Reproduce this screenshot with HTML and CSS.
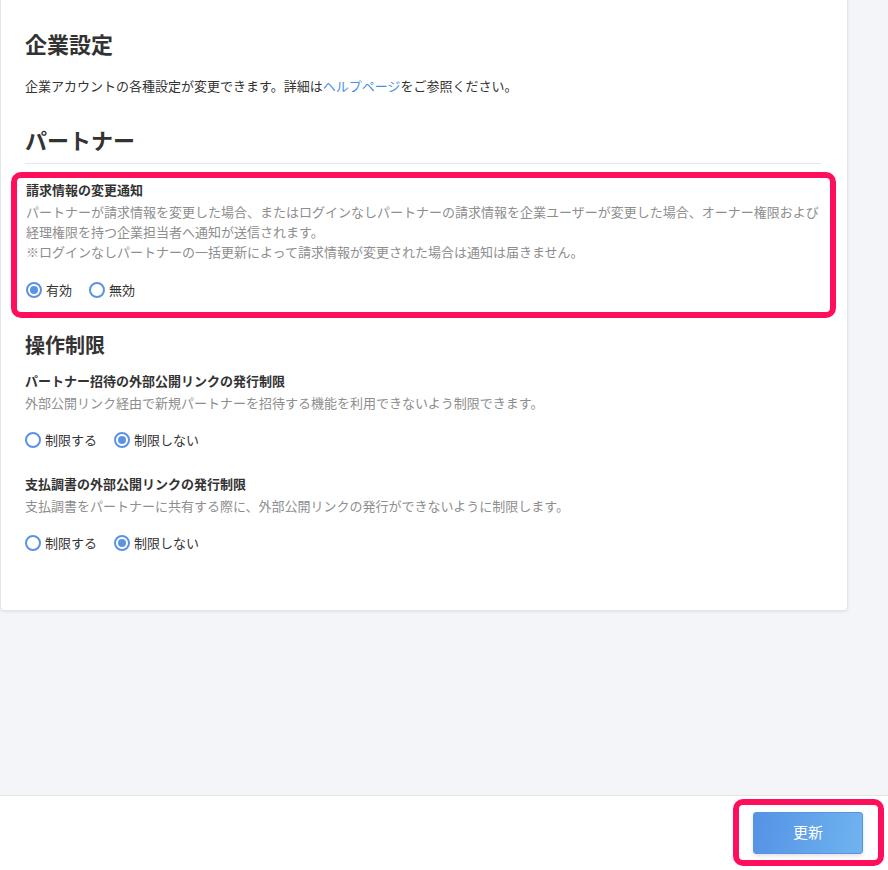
FILE: index.html
```html
<!DOCTYPE html>
<html lang="ja">

<head>
    <meta charset="UTF-8">
    <meta name="viewport" content="width=device-width, initial-scale=1.0">
    <title>企業設定</title>
    <link rel="stylesheet" href="styles.css">
</head>

<body>
    <div class="page">
        <main class="main">
            <div class="card">
                <h1 class="page-title">企業設定</h1>
                <p class="lead">企業アカウントの各種設定が変更できます。詳細は<a href="#" class="link">ヘルプページ</a>をご参照ください。</p>

                <h2 class="section-title">パートナー</h2>

                <!-- highlighted setting -->
                <div class="setting highlight">
                    <div class="setting-title">請求情報の変更通知</div>
                    <p class="setting-desc">パートナーが請求情報を変更した場合、またはログインなしパートナーの請求情報を企業ユーザーが変更した場合、オーナー権限および経理権限を持つ企業担当者へ通知が送信されます。<br>※ログインなしパートナーの一括更新によって請求情報が変更された場合は通知は届きません。</p>
                    <div class="radios">
                        <label class="radio"><input type="radio" name="notify" checked><span>有効</span></label>
                        <label class="radio"><input type="radio" name="notify"><span>無効</span></label>
                    </div>
                </div>

                <h3 class="group-title">操作制限</h3>

                <div class="setting">
                    <div class="setting-title">パートナー招待の外部公開リンクの発行制限</div>
                    <p class="setting-desc">外部公開リンク経由で新規パートナーを招待する機能を利用できないよう制限できます。</p>
                    <div class="radios">
                        <label class="radio"><input type="radio" name="invite"><span>制限する</span></label>
                        <label class="radio"><input type="radio" name="invite" checked><span>制限しない</span></label>
                    </div>
                </div>

                <div class="setting setting-next">
                    <div class="setting-title">支払調書の外部公開リンクの発行制限</div>
                    <p class="setting-desc">支払調書をパートナーに共有する際に、外部公開リンクの発行ができないように制限します。</p>
                    <div class="radios">
                        <label class="radio"><input type="radio" name="report"><span>制限する</span></label>
                        <label class="radio"><input type="radio" name="report" checked><span>制限しない</span></label>
                    </div>
                </div>
            </div>
        </main>

        <footer class="footer">
            <div class="button-mark">
                <button type="button" class="submit">更新</button>
            </div>
        </footer>
    </div>
</body>

</html>
```

FILE: styles.css
```css
* {
    box-sizing: border-box;
}

body {
    margin: 0;
    padding: 0;
    font-family: "Noto Sans CJK JP", "Noto Sans", sans-serif;
    color: #333;
    background-color: #f4f5f9;
}

.page {
    display: flex;
    flex-direction: column;
    height: 100vh;
    overflow: hidden;
}

.main {
    flex: 1;
    background-color: #f4f5f9;
}

.card {
    width: 848px;
    margin-top: -4px;
    padding: 30px 26px 57px 24px;
    background-color: #fff;
    border: 1px solid #e3e4e8;
    border-radius: 4px;
    box-shadow: 0 1px 3px rgba(0, 0, 0, 0.08);
}

.page-title {
    margin: 0;
    font-size: 22px;
    line-height: 32px;
    font-weight: bold;
}

.lead {
    margin: 17px 0 0;
    font-size: 13px;
    line-height: 20px;
}

.link {
    color: #4a8fe3;
    text-decoration: none;
}

.section-title {
    margin: 27px 0 0;
    padding-bottom: 8px;
    border-bottom: 1px solid #e8e8ec;
    font-size: 22px;
    line-height: 32px;
    font-weight: bold;
}

.group-title {
    margin: 12px 0 0;
    font-size: 20px;
    line-height: 30px;
    font-weight: bold;
}

.setting {
    margin-top: 11px;
}

.setting-next {
    margin-top: 24px;
}

.highlight {
    margin: 8px -15px 0 -14px;
    padding: 2px 4px 12px 9px;
    border: 6px solid #ff0f5b;
    border-radius: 10px;
}

.setting-title {
    font-size: 13px;
    line-height: 20px;
    font-weight: bold;
}

.setting-desc {
    margin: 2px 0 0;
    font-size: 13px;
    line-height: 20px;
    color: #8e8e8e;
}

.radios {
    display: flex;
    margin-top: 17px;
}

.highlight .radios {
    margin-top: 18px;
}

.radio {
    display: flex;
    align-items: center;
    gap: 4px;
    margin-right: 17px;
    font-size: 13px;
    line-height: 20px;
    cursor: pointer;
}

.radio input {
    appearance: none;
    -webkit-appearance: none;
    width: 16px;
    height: 16px;
    margin: 0;
    border: 2px solid #5b93e2;
    border-radius: 50%;
    background-color: #fff;
    display: flex;
    align-items: center;
    justify-content: center;
}

.radio input:checked::after {
    content: "";
    width: 8px;
    height: 8px;
    border-radius: 50%;
    background-color: #5b93e2;
}

.footer {
    height: 75px;
    display: flex;
    justify-content: flex-end;
    align-items: flex-start;
    padding: 3px 4px 0 0;
    background-color: #fff;
    border-top: 1px solid #e4e5e9;
}

.button-mark {
    padding: 7px 15px 6px 14px;
    border: 6px solid #ff0f5b;
    border-radius: 10px;
}

.submit {
    display: block;
    width: 110px;
    height: 42px;
    padding: 0 0 4px;
    border: 1px solid #5a93e2;
    border-radius: 3px;
    background: linear-gradient(100deg, #5592e5, #6fb4ef);
    color: #fff;
    font-family: "Noto Sans CJK JP", sans-serif;
    font-size: 15px;
    line-height: 1;
    cursor: pointer;
    box-shadow: 0 2px 4px rgba(0, 0, 0, 0.12);
}
```
